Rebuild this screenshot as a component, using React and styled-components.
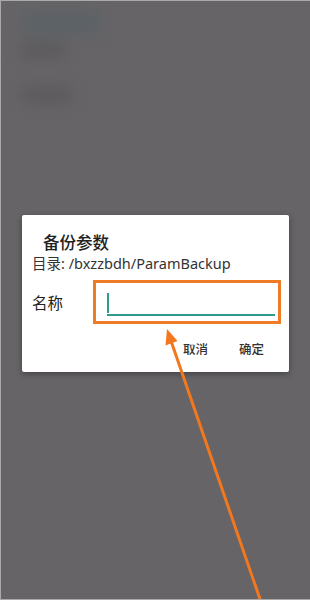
import styled, { createGlobalStyle } from 'styled-components';

const GlobalStyle = createGlobalStyle`
	html, body {
		margin: 0;
		padding: 0;
		background: #666467;
	}
	body {
		font-family: Roboto, 'Noto Sans CJK SC', 'Noto Sans', sans-serif;
	}
`;

export default function App() {
	return (
		<>
			<GlobalStyle />
			<Page>
				<Underlay>
					<Blob w={80} h={24} tint="#5c6266" />
					<Blob w={44} h={16} tint="#5c5a5d" />
					<Blob w={52} h={16} tint="#5c5a5d" gap={22} />
				</Underlay>
				<Scrim>
					<Dialog>
						<Title>备份参数</Title>
						<Path>目录: /bxzzbdh/ParamBackup</Path>
						<Row>
							<Label>名称</Label>
							<Highlight>
								<Field>
									<Caret />
								</Field>
							</Highlight>
						</Row>
						<Actions>
							<Action>取消</Action>
							<Action>确定</Action>
						</Actions>
					</Dialog>
				</Scrim>
				<Pointer viewBox="0 0 310 600" width="310" height="600">
					<line x1="261" y1="602" x2="171.4" y2="342" stroke="#f2781f" strokeWidth="3" strokeLinecap="round" />
					<polygon points="167,329 177.5,341 165.5,345.5" fill="#f2781f" />
				</Pointer>
			</Page>
		</>
	);
}

const Page = styled.div`
	position: relative;
	width: 310px;
	height: 600px;
	box-sizing: border-box;
	background: #666467;
	border-top: 1px solid #a9a9ab;
	border-left: 1px solid #a9a9ab;
	border-bottom: 1px solid #a9a9ab;
	overflow: hidden;
`;

const Underlay = styled.div`
	display: flex;
	flex-direction: column;
	gap: 7px;
	padding: 10px 0 0 20px;
	filter: blur(7px);
`;

const Blob = styled.div`
	width: ${(p) => p.w}px;
	height: ${(p) => p.h}px;
	margin-top: ${(p) => p.gap || 0}px;
	background: ${(p) => p.tint};
	border-radius: 6px;
`;

const Scrim = styled.div`
	position: absolute;
	inset: 0;
	display: flex;
	justify-content: center;
	align-items: flex-start;
	padding-top: 214px;
`;

const Dialog = styled.div`
	width: 267px;
	height: 157px;
	box-sizing: border-box;
	background: #ffffff;
	border-radius: 2px;
	box-shadow: 0 2px 6px rgba(0, 0, 0, 0.35);
	display: flex;
	flex-direction: column;
	padding: 17px 0 0 10px;
`;

const Title = styled.div`
	padding-left: 11px;
	font-family: 'Noto Sans CJK SC', sans-serif;
	font-size: 16.5px;
	font-weight: 500;
	line-height: 20px;
	color: #222;
`;

const Path = styled.div`
	margin-top: 2px;
	font-family: 'Noto Sans', 'Noto Sans CJK SC', sans-serif;
	font-size: 14.5px;
	line-height: 18px;
	color: #333;
`;

const Row = styled.div`
	display: flex;
	align-items: center;
	margin-top: 8px;
`;

const Label = styled.div`
	width: 61px;
	font-family: 'Noto Sans CJK SC', sans-serif;
	font-size: 15.5px;
	line-height: 20px;
	color: #222;
`;

const Highlight = styled.div`
	width: 188px;
	height: 44px;
	box-sizing: border-box;
	border: 3px solid #f07b26;
	padding: 8px 3px 0 11px;
`;

const Field = styled.div`
	position: relative;
	height: 23px;
	border-bottom: 2px solid #2f9a8c;
`;

const Caret = styled.span`
	position: absolute;
	left: 0;
	top: 2px;
	width: 2px;
	height: 20px;
	background: #2f9a8c;
`;

const Actions = styled.div`
	display: flex;
	justify-content: flex-end;
	gap: 31px;
	padding-right: 25px;
	margin-top: 17px;
`;

const Action = styled.div`
	font-family: 'Noto Sans CJK SC', sans-serif;
	font-size: 12.5px;
	font-weight: 500;
	line-height: 16px;
	color: #333;
`;

const Pointer = styled.svg`
	position: absolute;
	left: -1px;
	top: -1px;
	pointer-events: none;
`;
